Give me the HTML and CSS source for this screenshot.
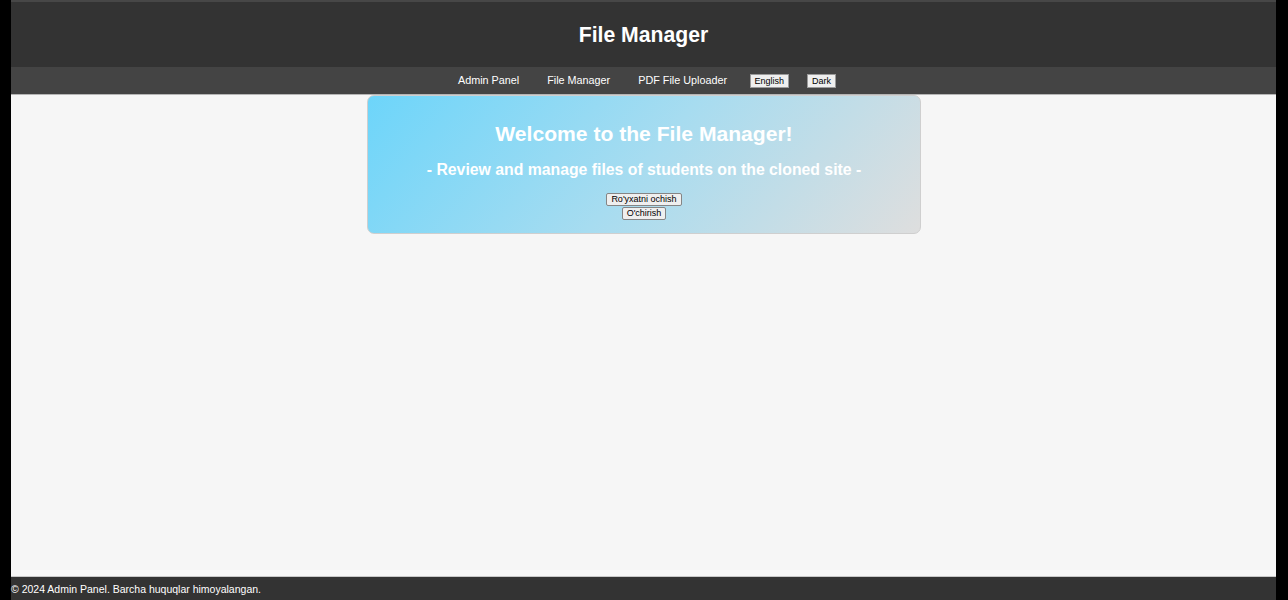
FILE: index.html
```html
<!DOCTYPE html>
<html lang="en">
<head>
<meta charset="utf-8">
<title>File Manager</title>
<link rel="stylesheet" href="styles.css">
</head>
<body>
<div class="page">
  <header class="header">
    <h1 class="title">File Manager</h1>
  </header>
  <nav class="nav">
    <a class="nav-link" href="#">Admin Panel</a>
    <a class="nav-link" href="#">File Manager</a>
    <a class="nav-link" href="#">PDF File Uploader</a>
    <button class="nav-btn nav-btn-lang">English</button>
    <button class="nav-btn nav-btn-theme">Dark</button>
  </nav>
  <main class="main">
    <section class="card">
      <h2 class="card-title">Welcome to the File Manager!</h2>
      <p class="card-sub">- Review and manage files of students on the cloned site -</p>
      <div class="card-actions">
        <button class="btn">Ro'yxatni ochish</button>
        <button class="btn">O'chirish</button>
      </div>
    </section>
  </main>
  <footer class="footer">© 2024 Admin Panel. Barcha huquqlar himoyalangan.</footer>
</div>
</body>
</html>
```
FILE: styles.css
```css
html, body {
  margin: 0;
  padding: 0;
  height: 100%;
}
body {
  background: #000;
  font-family: "Liberation Sans", Arial, sans-serif;
}
.page {
  width: 1265px;
  height: 600px;
  margin-left: 11px;
  background: #f6f6f6;
  display: flex;
  flex-direction: column;
}
.header {
  background: #333;
  border-top: 2px solid #474747;
  height: 65px;
  display: flex;
  align-items: center;
  justify-content: center;
}
.title {
  margin: 0;
  color: #fff;
  font-size: 21.2px;
  font-weight: bold;
}
.nav {
  background: #444;
  height: 25px;
  padding-bottom: 2px;
  border-bottom: 1px solid #b5b5b5;
  display: flex;
  align-items: center;
  justify-content: center;
  padding-left: 2px;
}
.nav-link {
  color: #fff;
  text-decoration: none;
  font-size: 10.8px;
  margin: 0 14px;
}
.nav-btn {
  font-family: "Liberation Sans", Arial, sans-serif;
  font-size: 9px;
  color: #000;
  background: #efefef;
  border: 1px solid #9a9a9a;
  border-radius: 0;
  padding: 0 4px;
  height: 14px;
  line-height: 12px;
  margin: 2px 9px 0;
}
.nav-btn-lang {
  margin-left: 8.5px;
  min-width: 39px;
}
.nav-btn-theme {
  min-width: 28px;
}
.main {
  flex: 1;
  display: flex;
  justify-content: center;
  align-items: flex-start;
  padding-left: 1px;
}
.card {
  width: 552px;
  height: 137px;
  border: 1px solid #cfcfcf;
  border-radius: 7px;
  background: linear-gradient(130deg, #6dd5fa 0%, #a7dcf0 50%, #dedede 100%);
  display: flex;
  flex-direction: column;
  align-items: center;
}
.card-title {
  margin: 25px 0 0;
  color: #fff;
  font-size: 21.1px;
  font-weight: bold;
  line-height: 26px;
}
.card-sub {
  margin: 12px 0 0;
  color: #fff;
  font-size: 15.8px;
  font-weight: bold;
  line-height: 22px;
}
.card-actions {
  margin-top: 12px;
  display: flex;
  flex-direction: column;
  align-items: center;
}
.btn {
  font-family: "Liberation Sans", Arial, sans-serif;
  font-size: 9px;
  color: #000;
  background: #efefef;
  border: 1px solid #858585;
  border-radius: 2px;
  padding: 0 4px;
  height: 13px;
  line-height: 11px;
  margin: 0;
}
.btn + .btn {
  margin-top: 1px;
}
.footer {
  background: #333;
  border-top: 1px solid #c8c8c8;
  height: 23px;
  color: #fff;
  font-size: 10.5px;
  line-height: 25px;
}
```
